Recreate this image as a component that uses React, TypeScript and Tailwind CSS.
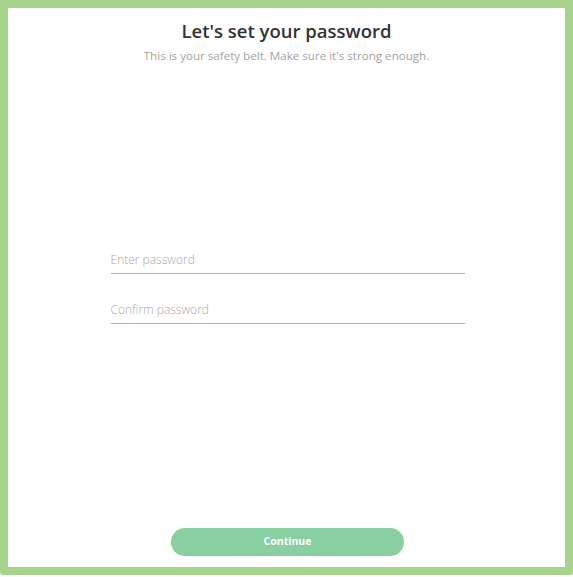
import React from "react";

export default function App() {
  return (
    <div className="w-[573px] h-[577px] bg-white" style={{ fontFamily: '"Open Sans", sans-serif' }}>
      <div className="h-[575px] bg-[#a8d38d] p-2 rounded-bl-[3px] rounded-br-[3px]">
        <div className="h-full bg-white flex flex-col items-center">
          <h1 className="mt-[10px] text-[18.5px] leading-[26px] font-semibold text-[#333333]">Let's set your password</h1>
          <p className="mt-[4px] text-[11.6px] leading-[16px] text-[#a3a3a3]">
            This is your safety belt. Make sure it's strong enough.
          </p>
          <div className="mt-[185px] ml-[2px] w-[354px] flex flex-col gap-[25px]">
            <input
              type="password"
              placeholder="Enter password"
              className="h-[25px] pb-[3px] w-full border-b border-[#b5b5b5] text-[12px] font-light text-[#555] placeholder:text-[#a9a9a9] outline-none bg-transparent"
            />
            <input
              type="password"
              placeholder="Confirm password"
              className="h-[25px] pb-[3px] w-full border-b border-[#b5b5b5] text-[12px] font-light text-[#555] placeholder:text-[#a9a9a9] outline-none bg-transparent"
            />
          </div>
          <div className="flex-1" />
          <button className="mb-[11px] ml-[2px] w-[233px] h-[28px] rounded-full bg-[#88cfa1] text-white text-[10.5px] font-bold">
            Continue
          </button>
        </div>
      </div>
    </div>
  );
}
